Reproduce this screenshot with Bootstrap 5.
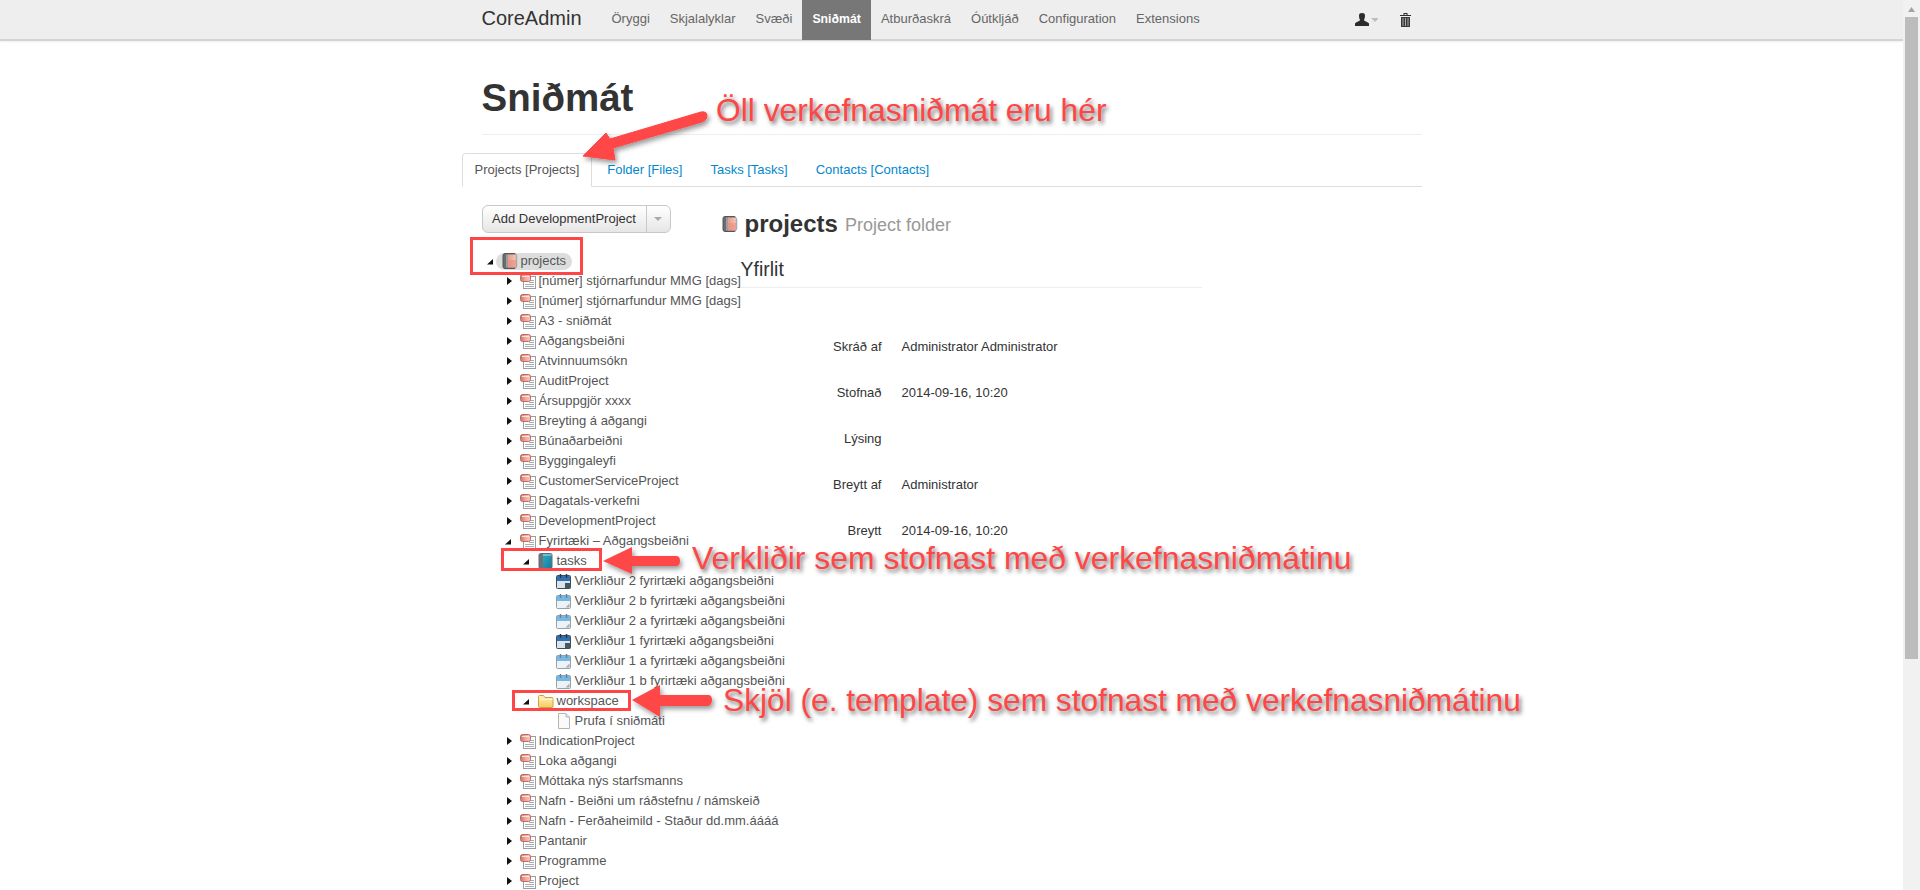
<!DOCTYPE html>
<html lang="is">
<head>
<meta charset="utf-8">
<title>Sniðmát</title>
<link href="https://cdn.jsdelivr.net/npm/bootstrap@5.3.0/dist/css/bootstrap.min.css" rel="stylesheet">
<style>
html,body{height:890px;overflow:hidden;background:#fff}
body{font-family:"Liberation Sans",Arial,sans-serif;font-size:13px;line-height:20px;color:#333}
.app-shell{height:890px;position:relative}
.page-area{width:1903px;flex:none}
.sb-track{width:17px;flex:none;background:#f1f1f1;padding:0 2px;position:relative}
.sb-up{height:17px;display:flex;justify-content:center;padding-top:7px}
.sb-thumb{height:642px;background:#bcbcbc}
.top-bar{height:41px;background:#eee;border-bottom:2px solid #d4d4d4;padding:0;box-shadow:0 1px 2px rgba(0,0,0,.07)}
.wrap-940{width:940px;margin:0 auto}
.top-bar .wrap-940{display:flex;align-items:flex-start;height:39px}
.brand-txt{font-size:20px;line-height:36px;color:#333;width:120px;text-decoration:none}
.top-bar .top-menu{flex-wrap:nowrap}
.top-bar .top-menu .nav-link{padding:0 10px;height:40px;line-height:38px;font-size:13px;color:#666}
.top-bar .top-menu .nav-link.active{background:#777;color:#fff;font-weight:700;font-size:12.3px}
.user-tools{margin-left:auto;gap:22px;padding:13px 11px 0 0}
.page-title{font-size:38.5px;line-height:40px;font-weight:700;margin:0;padding:37px 0 0;border-bottom:1px solid #eee;height:94px;color:#333}
.tab-row{margin:18px 0 0 -20px;border-bottom-color:#ddd;height:34px;font-size:13px}
.tab-row .nav-link{padding:6px 12px;line-height:20px;color:#0088cc;border-radius:4px 4px 0 0;margin-right:2px;height:34px}
.tab-row .nav-link.active{color:#555;border-color:#ddd #ddd #fff}
.split{padding-top:18px}
.left-col{width:240px;flex:none}
.right-col{flex:1 1 auto;min-width:0}
.add-btn{font-size:13px;line-height:18px;color:#333;padding:4px 9px;height:28px;background:linear-gradient(#fff,#e6e6e6);border:1px solid #c8c8c8}
.add-btn:first-child{width:165px}
.add-btn.split-caret{width:25px;padding:0;display:flex;align-items:center;justify-content:center}
.tree-list{list-style:none;margin:0;padding:0 0 0 18px;color:#555;white-space:nowrap}
.tree-root{margin-top:18px;padding-left:4px}
.tree-line{height:20px;display:flex;align-items:center}
.tw{width:16px;height:20px;flex:none;display:block;color:#111}
.tree-ico{width:16px;height:16px;flex:none;margin-right:3px}
.sel-pill{display:flex;align-items:center;background:#ddd;height:17px;border-radius:9px;margin-left:-6px;padding:0 6px}
.obj-title{margin:1px 0 0;font-size:24px;line-height:36px;font-weight:700;display:flex;align-items:center;color:#333}
.obj-title svg{width:16px;height:16px;margin-right:7px}
.obj-sub{font-size:18px;font-weight:400;color:#999;margin-left:7px;position:relative;top:1px}
.over-pane{margin-left:19px;width:461px}
.over-head{font-size:19.5px;line-height:28px;font-weight:400;margin:13px 0 0;padding-bottom:5px;border-bottom:1px solid #eee;height:33px;color:#333}
.info-rows{margin-top:36px}
.info-line{height:46px;display:flex;line-height:46px;margin:0}
.info-line dt{width:141px;text-align:right;font-weight:400;margin-right:20px}
.info-line dd{margin:0}
.mark-layer{position:absolute;inset:0;pointer-events:none}
.note-txt{position:absolute;color:#ff4646;font-size:31.9px;line-height:36px;white-space:nowrap;text-shadow:2px 3px 4px rgba(0,0,0,.55)}
.note-a{left:716px;top:92px;font-size:31.8px}
.note-b{left:692px;top:540px}
.note-c{left:723px;top:682px;font-size:31.7px}
.red-box{position:absolute;border:3px solid #ff4646}
.box-a{left:470px;top:237px;width:113px;height:38px}
.box-b{left:501px;top:548px;width:101px;height:23px}
.box-c{left:512px;top:690px;width:119px;height:21px}
.arrow-art{position:absolute;left:0;top:0;width:1903px;height:890px;overflow:visible}
.defs-box{position:absolute;width:0;height:0}
</style>
</head>
<body>
<svg class="defs-box" aria-hidden="true">
<defs>
<linearGradient id="gRed" x1="0" y1="0" x2="1" y2="0"><stop offset="0" stop-color="#cf7568"/><stop offset=".5" stop-color="#f2a99b"/><stop offset="1" stop-color="#f7c9be"/></linearGradient>
<linearGradient id="gBook" x1="0" y1="0" x2="1" y2="0"><stop offset="0" stop-color="#e89a8b"/><stop offset="1" stop-color="#f6c5b9"/></linearGradient>
<linearGradient id="gTeal" x1="0" y1="0" x2="1" y2="1"><stop offset="0" stop-color="#2fa8c4"/><stop offset="1" stop-color="#117f9c"/></linearGradient>
<linearGradient id="gFold" x1="0" y1="0" x2="0" y2="1"><stop offset="0" stop-color="#fff3b8"/><stop offset="1" stop-color="#f4cb62"/></linearGradient>
<symbol id="i-proj" viewBox="0 0 16 16">
<rect x="3.500" y="3.500" width="12" height="12" fill="#fff" stroke="#9a9fa4"/>
<path d="M9 7.500h5M9 9.500h5M5 11.500h9M5 13.500h9" stroke="#a8aeb4"/>
<rect x=".5" y="1.500" width="10" height="7" rx="2" fill="url(#gRed)" stroke="#bb6b5f"/>
<path d="M2 3.500h7" stroke="#fbe3dc"/>
</symbol>
<symbol id="i-book" viewBox="0 0 16 16">
<rect x="1" y=".5" width="13" height="15" rx="2" fill="#6a6d70" stroke="#555"/>
<rect x="4" y="1.500" width="3" height="13" fill="#9a9d9f"/>
<rect x="6" y="1.500" width="8" height="13" fill="url(#gBook)"/>
<rect x="6" y="7" width="8" height="7.500" fill="#e58b7c" opacity=".55"/>
<path d="M14.500 3v10" stroke="#aaa" stroke-width="1.500"/>
</symbol>
<symbol id="i-teal" viewBox="0 0 16 16">
<rect x="1" y=".5" width="13" height="15" rx="1.500" fill="#6a7478" stroke="#667"/>
<rect x="5" y="1" width="8.500" height="14" fill="url(#gTeal)"/>
<path d="M5 2h8.500" stroke="#a8dfe9"/>
</symbol>
<symbol id="i-cal" viewBox="0 0 16 16">
<rect x=".5" y="2.500" width="14" height="13" rx="1" fill="#eef2f5" stroke="#8da2b3"/>
<rect x="1" y="3" width="13" height="5" fill="#74b8e4"/>
<path d="M4.500 1v4M10.500 1v4" stroke="#6d8496" stroke-width="1.500"/>
<path d="M9.500 14.500l4-4v4z" fill="#a6aeb4"/>
</symbol>
<symbol id="i-cald" viewBox="0 0 16 16">
<rect x=".5" y="2.500" width="14" height="13" rx="1" fill="#dbe4ec" stroke="#3a4e60"/>
<rect x="1" y="3" width="13" height="5" fill="#3470ae"/>
<path d="M4.500 1v4M10.500 1v4" stroke="#24384a" stroke-width="1.500"/>
<rect x="9" y="10" width="5.500" height="5.500" fill="#48545e"/>
</symbol>
<symbol id="i-fold" viewBox="0 0 16 16">
<path d="M.5 13.500v-10a1 1 0 011-1h4l1.500 2h7a1 1 0 011 1v8a1 1 0 01-1 1h-12.500a1 1 0 01-1-1z" fill="url(#gFold)" stroke="#d3a23f"/>
<path d="M1.500 6.500h13" stroke="#fff6cf"/>
</symbol>
<symbol id="i-file" viewBox="0 0 16 16">
<path d="M2.500.5h7.500l3.500 3.500v11.500h-11z" fill="#fafafa" stroke="#b5b5b5"/>
<path d="M10 .5v3.500h3.500" fill="#e4e4e4" stroke="#b5b5b5"/>
</symbol>
<symbol id="tw-closed" viewBox="0 0 16 20"><path d="M3 6l5 4-5 4z" fill="currentColor"/></symbol>
<symbol id="tw-open" viewBox="0 0 16 20"><path d="M7 8v5.500h-6z" fill="currentColor"/></symbol>
</defs>
</svg>

<div class="app-shell d-flex">
<div class="page-area">
<nav class="navbar navbar-expand top-bar">
<div class="wrap-940">
<a class="brand-txt" href="#">CoreAdmin</a>
<ul class="navbar-nav top-menu">
<li class="nav-item"><a class="nav-link" href="#">Öryggi</a></li>
<li class="nav-item"><a class="nav-link" href="#">Skjalalyklar</a></li>
<li class="nav-item"><a class="nav-link" href="#">Svæði</a></li>
<li class="nav-item"><a class="nav-link active" href="#">Sniðmát</a></li>
<li class="nav-item"><a class="nav-link" href="#">Atburðaskrá</a></li>
<li class="nav-item"><a class="nav-link" href="#">Óútkljáð</a></li>
<li class="nav-item"><a class="nav-link" href="#">Configuration</a></li>
<li class="nav-item"><a class="nav-link" href="#">Extensions</a></li>
</ul>
<div class="user-tools d-flex">
<svg width="23" height="13" viewBox="0 0 23 13"><path d="M4 2.500C4 .8 5 0 7 0s3 .8 3 2.500c0 2-.6 3.500-1 4.500 0 1 4 2 5 3.500V13H0v-2.500C1 9 5 8 5 7c-.4-1-1-2.500-1-4.500z" fill="#2c2c2c"/><path d="M16 5h8l-4 4z" fill="#bdbdbd"/></svg>
<svg width="11" height="14" viewBox="0 0 11 14"><path d="M0 2h11v1H0zM3.500 0h4v2h-1V1h-2v1h-1z" fill="#2c2c2c"/><path d="M1 4h9v10H1z" fill="#3a3a3a"/><path d="M3 5v8M5.500 5v8M8 5v8" stroke="#aaa"/></svg>
</div>
</div>
</nav>

<main class="wrap-940">
<h1 class="page-title">Sniðmát</h1>
<ul class="nav nav-tabs tab-row">
<li class="nav-item"><a class="nav-link active" href="#">Projects [Projects]</a></li>
<li class="nav-item"><a class="nav-link" href="#">Folder [Files]</a></li>
<li class="nav-item"><a class="nav-link" href="#">Tasks [Tasks]</a></li>
<li class="nav-item"><a class="nav-link" href="#">Contacts [Contacts]</a></li>
</ul>
<div class="split d-flex">
<div class="left-col">
<div class="btn-group">
<button type="button" class="btn add-btn">Add DevelopmentProject</button>
<button type="button" class="btn add-btn split-caret" aria-label="Fleiri"><svg width="8" height="4" viewBox="0 0 8 4"><path d="M0 0h8L4 4z" fill="#aaa"/></svg></button>
</div>
<ul class="tree-list tree-root">
<li><div class="tree-line"><svg class="tw"><use href="#tw-open"/></svg><span class="sel-pill"><svg class="tree-ico"><use href="#i-book"/></svg>projects</span></div>
<ul class="tree-list">
<li><div class="tree-line"><svg class="tw"><use href="#tw-closed"/></svg><svg class="tree-ico"><use href="#i-proj"/></svg>[númer] stjórnarfundur MMG [dags]</div></li>
<li><div class="tree-line"><svg class="tw"><use href="#tw-closed"/></svg><svg class="tree-ico"><use href="#i-proj"/></svg>[númer] stjórnarfundur MMG [dags]</div></li>
<li><div class="tree-line"><svg class="tw"><use href="#tw-closed"/></svg><svg class="tree-ico"><use href="#i-proj"/></svg>A3 - sniðmát</div></li>
<li><div class="tree-line"><svg class="tw"><use href="#tw-closed"/></svg><svg class="tree-ico"><use href="#i-proj"/></svg>Aðgangsbeiðni</div></li>
<li><div class="tree-line"><svg class="tw"><use href="#tw-closed"/></svg><svg class="tree-ico"><use href="#i-proj"/></svg>Atvinnuumsókn</div></li>
<li><div class="tree-line"><svg class="tw"><use href="#tw-closed"/></svg><svg class="tree-ico"><use href="#i-proj"/></svg>AuditProject</div></li>
<li><div class="tree-line"><svg class="tw"><use href="#tw-closed"/></svg><svg class="tree-ico"><use href="#i-proj"/></svg>Ársuppgjör xxxx</div></li>
<li><div class="tree-line"><svg class="tw"><use href="#tw-closed"/></svg><svg class="tree-ico"><use href="#i-proj"/></svg>Breyting á aðgangi</div></li>
<li><div class="tree-line"><svg class="tw"><use href="#tw-closed"/></svg><svg class="tree-ico"><use href="#i-proj"/></svg>Búnaðarbeiðni</div></li>
<li><div class="tree-line"><svg class="tw"><use href="#tw-closed"/></svg><svg class="tree-ico"><use href="#i-proj"/></svg>Byggingaleyfi</div></li>
<li><div class="tree-line"><svg class="tw"><use href="#tw-closed"/></svg><svg class="tree-ico"><use href="#i-proj"/></svg>CustomerServiceProject</div></li>
<li><div class="tree-line"><svg class="tw"><use href="#tw-closed"/></svg><svg class="tree-ico"><use href="#i-proj"/></svg>Dagatals-verkefni</div></li>
<li><div class="tree-line"><svg class="tw"><use href="#tw-closed"/></svg><svg class="tree-ico"><use href="#i-proj"/></svg>DevelopmentProject</div></li>
<li><div class="tree-line"><svg class="tw"><use href="#tw-open"/></svg><svg class="tree-ico"><use href="#i-proj"/></svg>Fyrirtæki – Aðgangsbeiðni</div>
<ul class="tree-list">
<li><div class="tree-line"><svg class="tw"><use href="#tw-open"/></svg><svg class="tree-ico"><use href="#i-teal"/></svg>tasks</div>
<ul class="tree-list">
<li><div class="tree-line"><span class="tw"></span><svg class="tree-ico"><use href="#i-cald"/></svg>Verkliður 2 fyrirtæki aðgangsbeiðni</div></li>
<li><div class="tree-line"><span class="tw"></span><svg class="tree-ico"><use href="#i-cal"/></svg>Verkliður 2 b fyrirtæki aðgangsbeiðni</div></li>
<li><div class="tree-line"><span class="tw"></span><svg class="tree-ico"><use href="#i-cal"/></svg>Verkliður 2 a fyrirtæki aðgangsbeiðni</div></li>
<li><div class="tree-line"><span class="tw"></span><svg class="tree-ico"><use href="#i-cald"/></svg>Verkliður 1 fyrirtæki aðgangsbeiðni</div></li>
<li><div class="tree-line"><span class="tw"></span><svg class="tree-ico"><use href="#i-cal"/></svg>Verkliður 1 a fyrirtæki aðgangsbeiðni</div></li>
<li><div class="tree-line"><span class="tw"></span><svg class="tree-ico"><use href="#i-cal"/></svg>Verkliður 1 b fyrirtæki aðgangsbeiðni</div></li>
</ul></li>
<li><div class="tree-line"><svg class="tw"><use href="#tw-open"/></svg><svg class="tree-ico"><use href="#i-fold"/></svg>workspace</div>
<ul class="tree-list">
<li><div class="tree-line"><span class="tw"></span><svg class="tree-ico"><use href="#i-file"/></svg>Prufa í sniðmáti</div></li>
</ul></li>
</ul></li>
<li><div class="tree-line"><svg class="tw"><use href="#tw-closed"/></svg><svg class="tree-ico"><use href="#i-proj"/></svg>IndicationProject</div></li>
<li><div class="tree-line"><svg class="tw"><use href="#tw-closed"/></svg><svg class="tree-ico"><use href="#i-proj"/></svg>Loka aðgangi</div></li>
<li><div class="tree-line"><svg class="tw"><use href="#tw-closed"/></svg><svg class="tree-ico"><use href="#i-proj"/></svg>Móttaka nýs starfsmanns</div></li>
<li><div class="tree-line"><svg class="tw"><use href="#tw-closed"/></svg><svg class="tree-ico"><use href="#i-proj"/></svg>Nafn - Beiðni um ráðstefnu / námskeið</div></li>
<li><div class="tree-line"><svg class="tw"><use href="#tw-closed"/></svg><svg class="tree-ico"><use href="#i-proj"/></svg>Nafn - Ferðaheimild - Staður dd.mm.áááá</div></li>
<li><div class="tree-line"><svg class="tw"><use href="#tw-closed"/></svg><svg class="tree-ico"><use href="#i-proj"/></svg>Pantanir</div></li>
<li><div class="tree-line"><svg class="tw"><use href="#tw-closed"/></svg><svg class="tree-ico"><use href="#i-proj"/></svg>Programme</div></li>
<li><div class="tree-line"><svg class="tw"><use href="#tw-closed"/></svg><svg class="tree-ico"><use href="#i-proj"/></svg>Project</div></li>
</ul></li>
</ul>
</div>
<div class="right-col">
<h2 class="obj-title"><svg><use href="#i-book"/></svg>projects<span class="obj-sub">Project folder</span></h2>
<section class="over-pane">
<h3 class="over-head">Yfirlit</h3>
<dl class="info-rows">
<div class="info-line"><dt>Skráð af</dt><dd>Administrator Administrator</dd></div>
<div class="info-line"><dt>Stofnað</dt><dd>2014-09-16, 10:20</dd></div>
<div class="info-line"><dt>Lýsing</dt><dd></dd></div>
<div class="info-line"><dt>Breytt af</dt><dd>Administrator</dd></div>
<div class="info-line"><dt>Breytt</dt><dd>2014-09-16, 10:20</dd></div>
</dl>
</section>
</div>
</div>
</main>
</div>
<aside class="sb-track">
<div class="sb-up"><svg width="7" height="5" viewBox="0 0 7 5"><path d="M3.500 0L7 5H0z" fill="#a3a3a3"/></svg></div>
<div class="sb-thumb"></div>
</aside>

<div class="mark-layer">
<svg class="arrow-art" viewBox="0 0 1903 890">
<defs><filter id="sh" x="-20%" y="-40%" width="150%" height="200%"><feDropShadow dx="2" dy="3" stdDeviation="2.500" flood-color="#000" flood-opacity=".4"/></filter></defs>
<g fill="#ff4646" filter="url(#sh)">
<path d="M583 156L606 133L610 139L701 112Q707 111 707 116Q707 120 702 122L613 148L615 160z" stroke="#ff4646" stroke-linejoin="round" stroke-width="1"/>
<path d="M603 561L632 547V556H676Q680 556 680 561T676 566H632V574z"/>
<path d="M632 700L660 685V695H708Q712 695 712 700T708 706H660V717z"/>
</g>
</svg>
<div class="red-box box-a"></div>
<div class="red-box box-b"></div>
<div class="red-box box-c"></div>
<div class="note-txt note-a">Öll verkefnasniðmát eru hér</div>
<div class="note-txt note-b">Verkliðir sem stofnast með verkefnasniðmátinu</div>
<div class="note-txt note-c">Skjöl (e. template) sem stofnast með verkefnasniðmátinu</div>
</div>
</div>
<script src="https://cdn.jsdelivr.net/npm/bootstrap@5.3.0/dist/js/bootstrap.bundle.min.js"></script>
</body>
</html>
